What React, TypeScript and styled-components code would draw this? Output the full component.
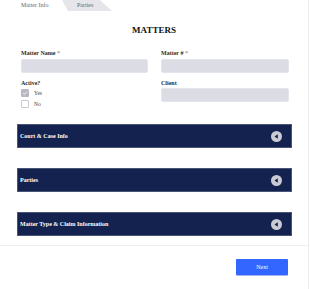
import React, { useState } from 'react';
import styled, { createGlobalStyle } from 'styled-components';

const GlobalStyle = createGlobalStyle`
  body { margin: 0; background: #fff; font-family: "Liberation Serif", "Times New Roman", serif; }
`;

const Page = styled.div`
  width: 308px;
  height: 289px;
  border-right: 1px solid #ececf0;
  display: flex;
  flex-direction: column;
`;

const TabBar = styled.div`
  display: flex;
  height: 11px;
  padding-left: 21px;
`;

const Tab = styled.div<{ $active?: boolean }>`
  font-size: 6px;
  line-height: 11px;
  color: #666;
  width: ${p => (p.$active ? '41px' : '50px')};
  padding-left: ${p => (p.$active ? '0' : '15px')};
  box-sizing: border-box;
  background: ${p => (p.$active ? 'transparent' : '#e6e6ea')};
  clip-path: ${p => (p.$active ? 'none' : 'polygon(0 0, 76% 0, 100% 100%, 12% 100%)')};
`;

const Title = styled.h1`
  margin: 13px 0 13px;
  font-size: 9px;
  line-height: 12px;
  font-weight: bold;
  text-align: center;
  color: #111;
`;

const Form = styled.div`
  display: grid;
  grid-template-columns: 127px 128px;
  column-gap: 13px;
  row-gap: 6px;
  padding: 0 20px 0 21px;
`;

const Field = styled.div`
  display: flex;
  flex-direction: column;
`;

const Label = styled.label<{ $tight?: boolean }>`
  font-size: 6px;
  line-height: 8px;
  font-weight: bold;
  color: #2a2a2a;
  margin-bottom: ${p => (p.$tight ? 1 : 2)}px;
`;

const Req = styled.span`
  font-weight: normal;
  color: #666;
`;

const Input = styled.div`
  height: 14px;
  box-sizing: border-box;
  background: #dcdce5;
  border: 1px solid #e4e4ec;
  border-radius: 2px;
`;

const CheckRow = styled.div<{ $gap?: number }>`
  display: flex;
  align-items: center;
  gap: 5px;
  margin-top: ${p => p.$gap ?? 0}px;
  font-size: 5.5px;
  color: #444;
`;

const Box = styled.div<{ $checked?: boolean }>`
  width: 8px;
  height: 8px;
  box-sizing: border-box;
  border: 1px solid ${p => (p.$checked ? '#b7b8c4' : '#c8c8cf')};
  background: ${p => (p.$checked ? '#b7b8c4' : '#fff')};
  border-radius: 1px;
  display: flex;
  align-items: center;
  justify-content: center;
`;

const Sections = styled.div`
  display: flex;
  flex-direction: column;
  gap: 20px;
  padding: 0 16px 0 17px;
  margin-top: 16px;
`;

const Bar = styled.div`
  height: 24px;
  box-sizing: border-box;
  background: #13224f;
  border: 1px solid #4a5478;
  display: flex;
  align-items: center;
  justify-content: space-between;
  padding: 0 9px 0 2px;
  color: #fff;
  font-size: 6px;
  font-weight: bold;
`;

const Footer = styled.div`
  margin-top: 9px;
  border-top: 1px solid #efeff2;
  display: flex;
  justify-content: flex-end;
  padding: 13px 20px 0 0;
`;

const NextButton = styled.button`
  width: 52px;
  height: 16px;
  border: none;
  border-radius: 1px;
  background: #3366ff;
  box-shadow: 0 1px 0 #9fb4f0;
  color: #fff;
  font-family: inherit;
  font-size: 6px;
  padding: 0;
`;

const Toggle = () => (
  <svg width="11" height="11" viewBox="0 0 10 10">
    <circle cx="5" cy="5" r="5" fill="#c9cad3" />
    <path d="M3.2 5 L6.2 3 L6.2 7 Z" fill="#13224f" />
  </svg>
);

const Check = () => (
  <svg width="6" height="6" viewBox="0 0 6 6">
    <path d="M1 3.2 L2.4 4.5 L5 1.6" stroke="#fff" strokeWidth="0.8" fill="none" />
  </svg>
);

const sections = ['Court & Case Info', 'Parties', 'Matter Type & Claim Information'];

export default function App() {
  const [active, setActive] = useState(true);

  return (
    <>
      <GlobalStyle />
      <Page>
        <TabBar>
          <Tab $active>Matter Info</Tab>
          <Tab>Parties</Tab>
        </TabBar>
        <Title>MATTERS</Title>
        <Form>
          <Field>
            <Label>Matter Name <Req>*</Req></Label>
            <Input />
          </Field>
          <Field>
            <Label>Matter # <Req>*</Req></Label>
            <Input />
          </Field>
          <Field>
            <Label>Active?</Label>
            <CheckRow onClick={() => setActive(true)}>
              <Box $checked={active}>{active && <Check />}</Box>Yes
            </CheckRow>
            <CheckRow $gap={3} onClick={() => setActive(false)}>
              <Box $checked={!active}>{!active && <Check />}</Box>No
            </CheckRow>
          </Field>
          <Field>
            <Label $tight>Client</Label>
            <Input />
          </Field>
        </Form>
        <Sections>
          {sections.map(s => (
            <Bar key={s}>
              {s}
              <Toggle />
            </Bar>
          ))}
        </Sections>
        <Footer>
          <NextButton>Next</NextButton>
        </Footer>
      </Page>
    </>
  );
}
